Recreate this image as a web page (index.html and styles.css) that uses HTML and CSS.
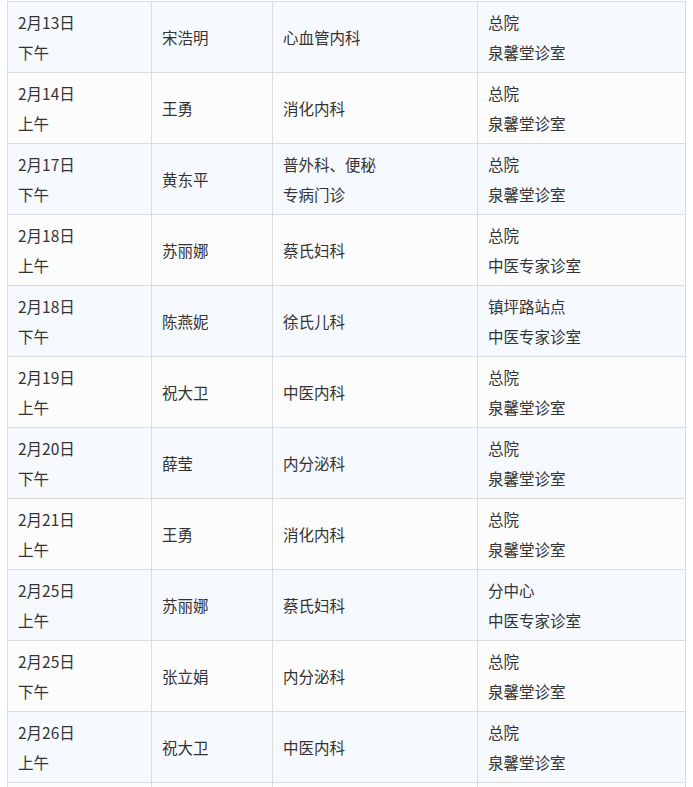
FILE: index.html
```html
<!DOCTYPE html>
<html lang="zh-CN">
<head>
<meta charset="utf-8">
<link rel="stylesheet" href="styles.css">
</head>
<body>
<table class="schedule">
<colgroup>
<col class="c-date"><col class="c-doc"><col class="c-dept"><col class="c-loc">
</colgroup>
<tbody>
<tr><td>2月13日<br>下午</td><td>宋浩明</td><td>心血管内科</td><td>总院<br>泉馨堂诊室</td></tr>
<tr><td>2月14日<br>上午</td><td>王勇</td><td>消化内科</td><td>总院<br>泉馨堂诊室</td></tr>
<tr><td>2月17日<br>下午</td><td>黄东平</td><td>普外科、便秘<br>专病门诊</td><td>总院<br>泉馨堂诊室</td></tr>
<tr><td>2月18日<br>上午</td><td>苏丽娜</td><td>蔡氏妇科</td><td>总院<br>中医专家诊室</td></tr>
<tr><td>2月18日<br>下午</td><td>陈燕妮</td><td>徐氏儿科</td><td>镇坪路站点<br>中医专家诊室</td></tr>
<tr><td>2月19日<br>上午</td><td>祝大卫</td><td>中医内科</td><td>总院<br>泉馨堂诊室</td></tr>
<tr><td>2月20日<br>下午</td><td>薛莹</td><td>内分泌科</td><td>总院<br>泉馨堂诊室</td></tr>
<tr><td>2月21日<br>上午</td><td>王勇</td><td>消化内科</td><td>总院<br>泉馨堂诊室</td></tr>
<tr><td>2月25日<br>上午</td><td>苏丽娜</td><td>蔡氏妇科</td><td>分中心<br>中医专家诊室</td></tr>
<tr><td>2月25日<br>下午</td><td>张立娟</td><td>内分泌科</td><td>总院<br>泉馨堂诊室</td></tr>
<tr><td>2月26日<br>上午</td><td>祝大卫</td><td>中医内科</td><td>总院<br>泉馨堂诊室</td></tr>
<tr class="next"><td></td><td></td><td></td><td></td></tr>
</tbody>
</table>
</body>
</html>
```
FILE: styles.css
```css
html, body {
  margin: 0;
  padding: 0;
  background: #ffffff;
}
body {
  padding: 1px 0 0 7px;
  font-family: "Noto Sans CJK SC", "Noto Sans", sans-serif;
  font-size: 15.5px;
  color: #333333;
}
.schedule {
  border-collapse: collapse;
  table-layout: fixed;
  width: 678px;
}
.c-date { width: 144px; }
.c-doc { width: 121px; }
.c-dept { width: 205px; }
.c-loc { width: 208px; }
.schedule td {
  border: 1px solid #dcdcdc;
  padding: 5px 10px;
  height: 60px;
  line-height: 30px;
  vertical-align: middle;
  box-sizing: content-box;
}
.schedule tr:nth-child(odd) td { background: #f6f9fe; }
.schedule tr:nth-child(even) td { background: #fcfcfc; }
```
